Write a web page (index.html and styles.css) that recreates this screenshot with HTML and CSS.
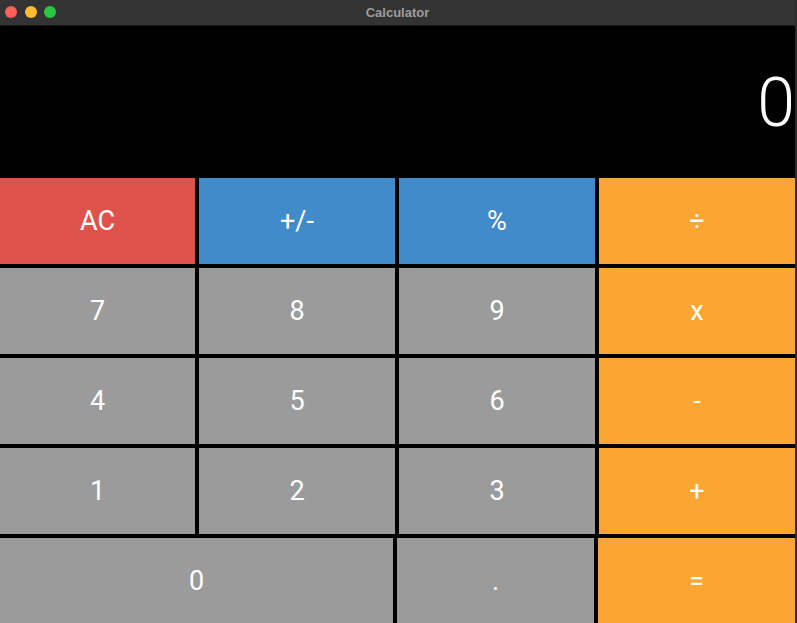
FILE: index.html
```html
<!DOCTYPE html>
<html>
<head>
<meta charset="utf-8">
<title>Calculator</title>
<link rel="stylesheet" href="styles.css">
</head>
<body>
<div class="window">
  <div class="titlebar">
    <div class="lights">
      <span class="light red"></span>
      <span class="light yellow"></span>
      <span class="light green"></span>
    </div>
    <div class="title">Calculator</div>
  </div>
  <div class="app">
    <div class="display">0</div>
    <div class="keys">
      <div class="key k-red">AC</div>
      <div class="key k-blue">+/-</div>
      <div class="key k-blue">%</div>
      <div class="key k-orange">÷</div>
      <div class="key">7</div>
      <div class="key">8</div>
      <div class="key">9</div>
      <div class="key k-orange">x</div>
      <div class="key">4</div>
      <div class="key">5</div>
      <div class="key">6</div>
      <div class="key k-orange">-</div>
      <div class="key">1</div>
      <div class="key">2</div>
      <div class="key">3</div>
      <div class="key k-orange">+</div>
    </div>
    <div class="lastrow">
      <div class="key">0</div>
      <div class="key">.</div>
      <div class="key k-orange">=</div>
    </div>
  </div>
</div>
</body>
</html>
```

FILE: styles.css
```css
* { box-sizing: border-box; }
html, body {
  margin: 0;
  padding: 0;
  background: #000;
  overflow: hidden;
}
.window {
  width: 797px;
  height: 623px;
  display: flex;
  flex-direction: column;
  background: #000;
  border-right: 2px solid #2c2c2c;
}
.titlebar {
  height: 26px;
  flex: none;
  background: #333334;
  border-bottom: 1px solid #1a1a1a;
  display: flex;
  align-items: center;
  justify-content: center;
  position: relative;
}
.lights {
  position: absolute;
  left: 5px;
  top: 6px;
  display: flex;
  gap: 7.5px;
}
.light {
  width: 12px;
  height: 12px;
  border-radius: 50%;
  display: block;
}
.red { background: #fe5f57; }
.yellow { background: #febc2e; }
.green { background: #28c840; }
.title {
  font-family: "Helvetica Neue", "Liberation Sans", Arial, sans-serif;
  font-weight: bold;
  font-size: 13px;
  color: #9e9e9e;
  margin-top: -1px;
}
.app {
  flex: 1;
  display: flex;
  flex-direction: column;
}
.display {
  height: 152px;
  flex: none;
  color: #fff;
  font-family: "Roboto", "Helvetica Neue", sans-serif;
  font-weight: 300;
  font-size: 68px;
  display: flex;
  align-items: center;
  justify-content: flex-end;
  padding-right: 0;
  padding-top: 2px;
  line-height: 1;
}
.keys {
  display: grid;
  grid-template-columns: 195px 196px 196px 1fr;
  grid-auto-rows: 86px;
  gap: 4px;
}
.lastrow {
  margin-top: 4px;
  display: grid;
  grid-template-columns: 393px 197px 1fr;
  gap: 4px;
  flex: 1;
}
.key {
  background: #9b9b9b;
  color: #fff;
  font-family: "Roboto", "Helvetica Neue", sans-serif;
  font-size: 27px;
  display: flex;
  align-items: center;
  justify-content: center;
}
.k-red { background: #dd524b; }
.k-blue { background: #418bca; }
.k-orange { background: #fba633; }
```
